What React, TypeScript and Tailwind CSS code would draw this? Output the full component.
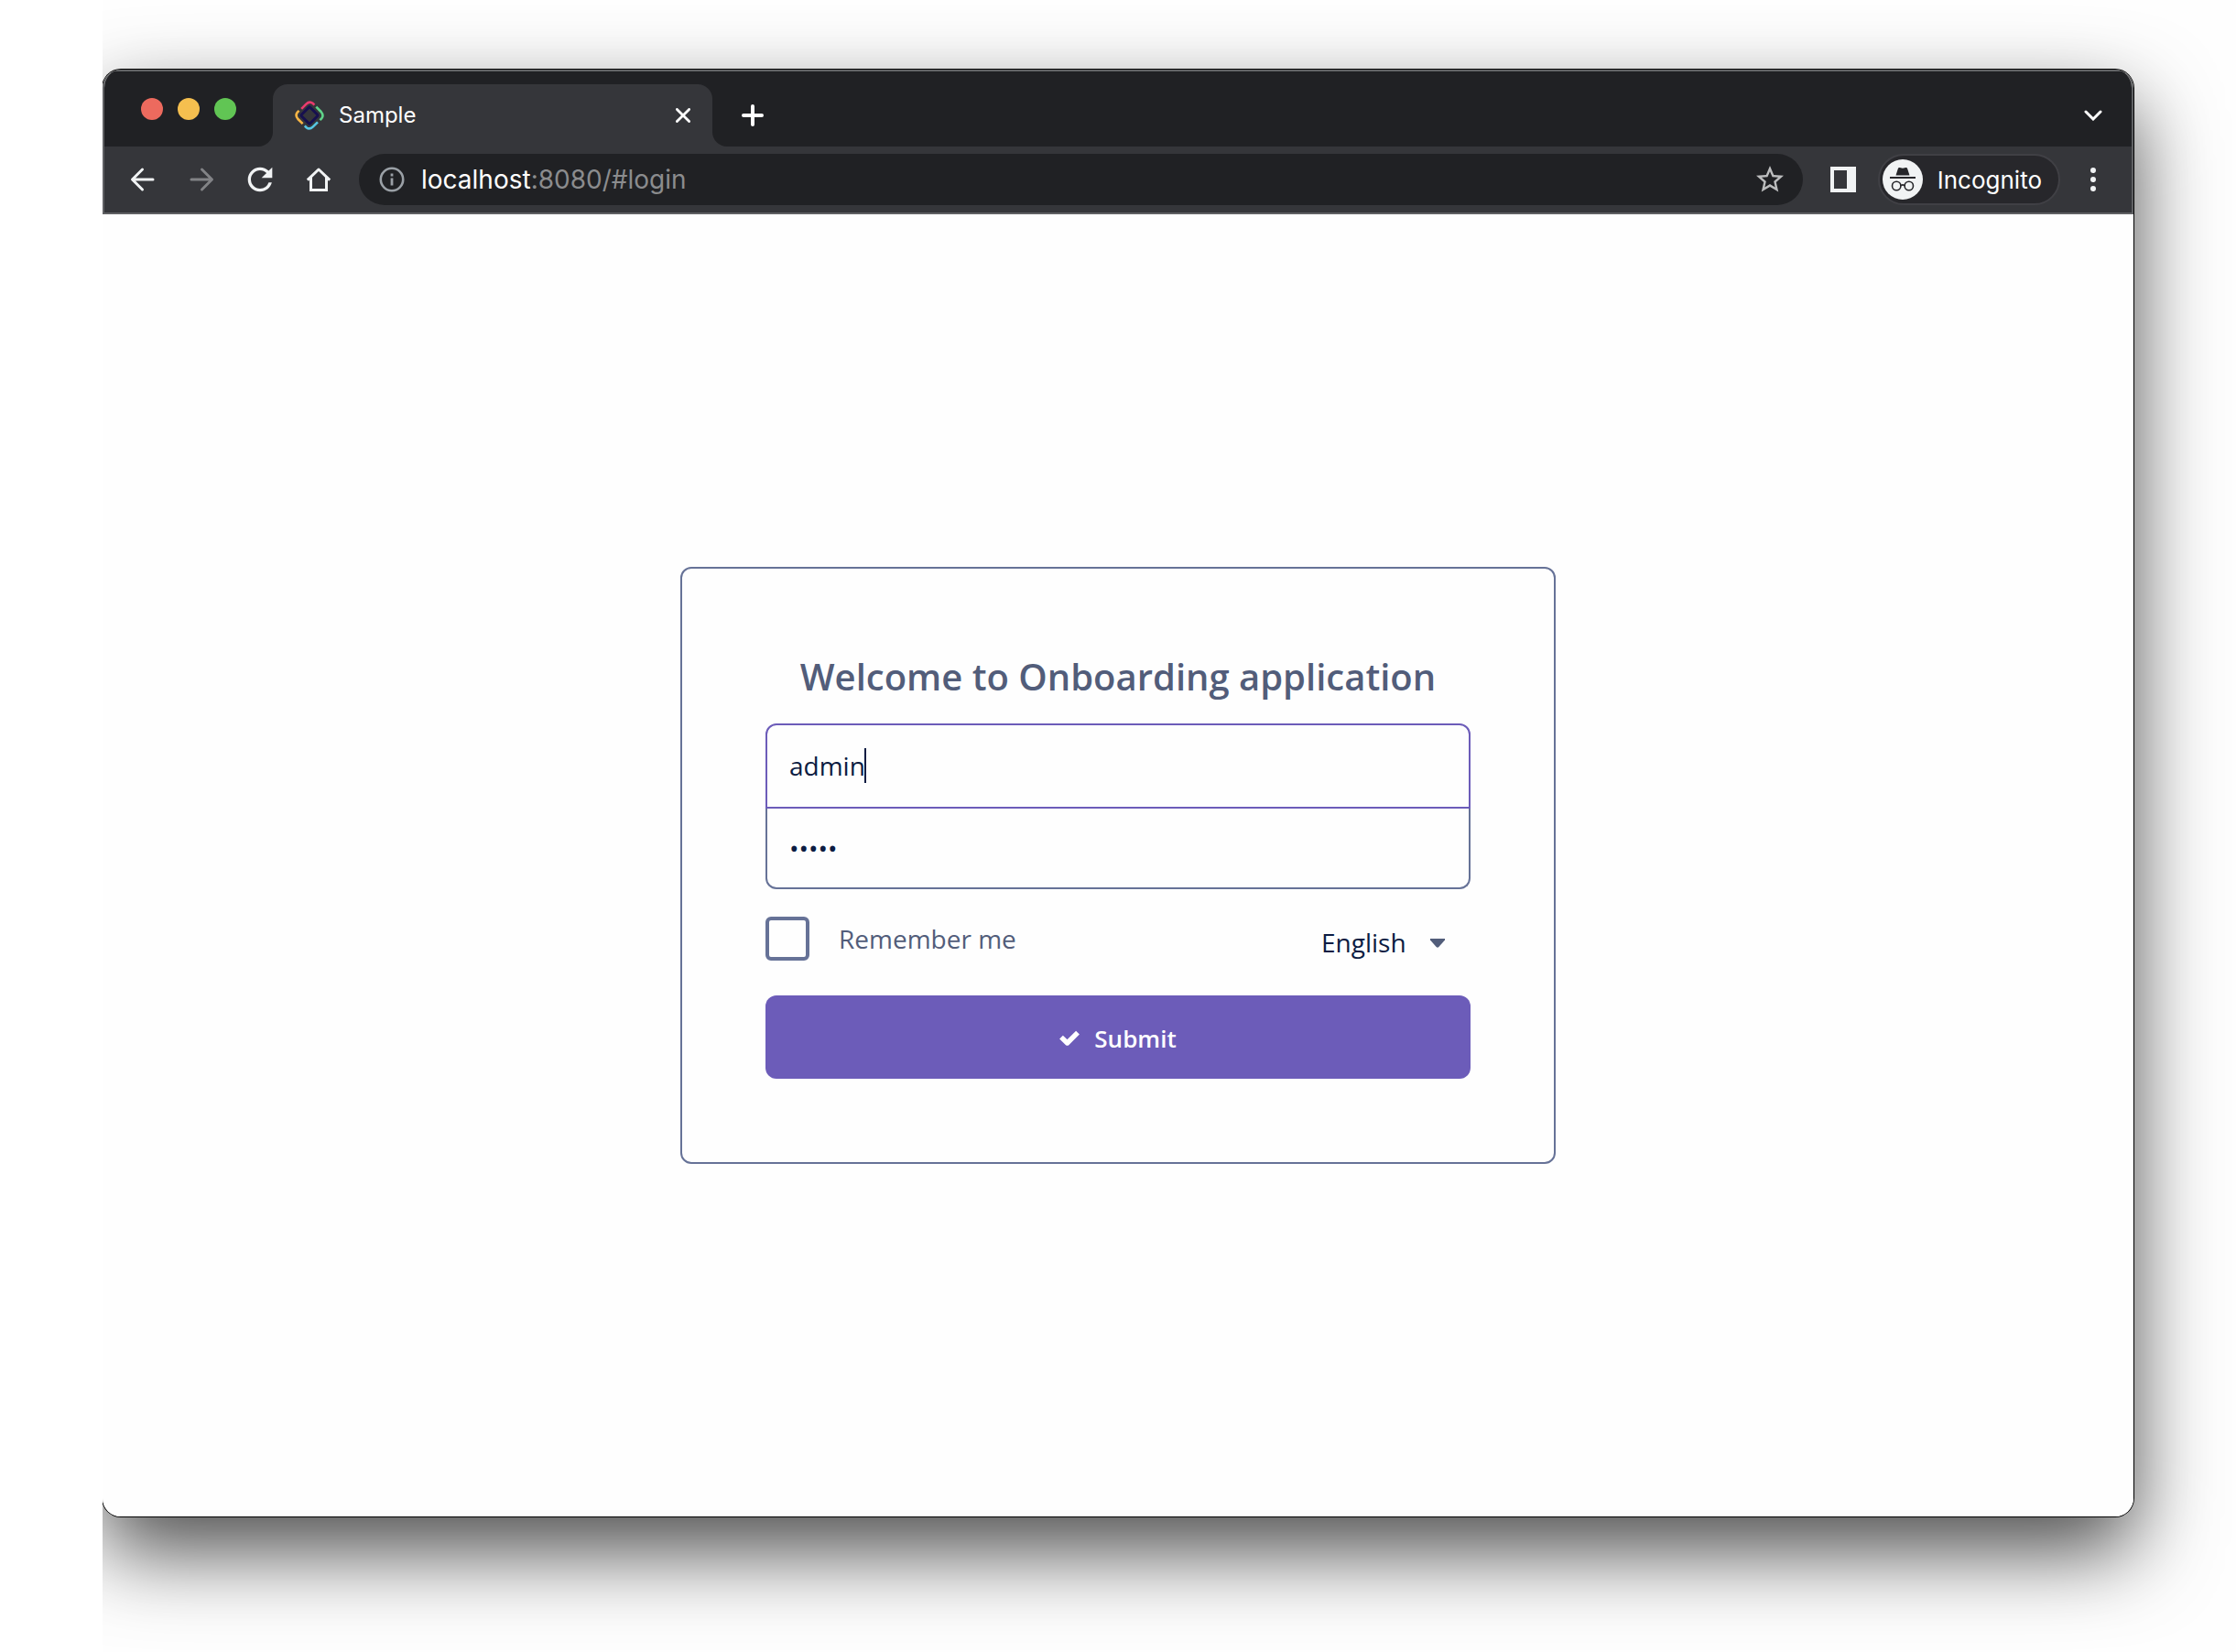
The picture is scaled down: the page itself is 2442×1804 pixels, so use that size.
import { useState } from "react";
import type { ReactNode } from "react";
import { MdRefresh, MdStarBorder } from "react-icons/md";

function Favicon() {
  return (
    <svg viewBox="0 0 32 32" className="size-8 shrink-0" fill="none" strokeWidth="2.6" aria-hidden="true">
      <rect x="9.3" y="9.3" width="13.4" height="13.4" rx="1" transform="rotate(45 16 16)" stroke="#16104f" strokeWidth="3" />
      <path d="M7.2 8.8 L12.4 3.6 Q16 0 19.6 2.8 L21.4 4.6" stroke="#ea3a6e" />
      <path d="M23.3 6.6 L28.6 12 Q32 16 29.2 19.4 L27.4 21.2" stroke="#5fd38a" />
      <path d="M25 23.4 L19.6 28.6 Q16 32 12.6 29.2 L10.8 27.4" stroke="#56c6e4" />
      <path d="M8.6 25.2 L3.4 20 Q0 16 2.8 12.6 L4.6 10.8" stroke="#f6b545" />
    </svg>
  );
}

function ArrowIcon({ back }: { back?: boolean }) {
  return (
    <svg viewBox="0 0 28 28" className="size-7" fill="none" stroke="currentColor" strokeWidth="3" strokeLinecap="round" strokeLinejoin="round" aria-hidden="true">
      {back ? <path d="M25 14H3M13.500 3L2.500 14l11 11" /> : <path d="M3 14h22M14.500 3l11 11-11 11" />}
    </svg>
  );
}

function HomeIcon() {
  return (
    <svg viewBox="0 0 28 28" className="size-7" fill="none" stroke="currentColor" strokeWidth="3" strokeLinejoin="round" aria-hidden="true">
      <path d="M1.800 14.600 L14 3 L26.200 14.600" />
      <path d="M5.500 12v13.500h17V12" strokeLinejoin="miter" />
    </svg>
  );
}

function InfoIcon() {
  return (
    <svg viewBox="0 0 28 28" className="size-7 shrink-0 text-[#9aa0a6]" fill="none" stroke="currentColor" aria-hidden="true">
      <circle cx="14" cy="14" r="12.200" strokeWidth="2.600" />
      <path d="M14 12.500v8M14 7.500v3" strokeWidth="2.800" />
    </svg>
  );
}

function IncognitoIcon() {
  return (
    <svg viewBox="0 0 44 44" className="size-11 shrink-0" aria-hidden="true">
      <circle cx="22" cy="22" r="22" fill="#f1f3f4" />
      <path d="M14.500 17.600 L17 9.800 Q17.500 8.600 18.800 9 L22 9.800 L25.200 9 Q26.500 8.600 27 9.800 L29.500 17.600 Z" fill="#26262a" />
      <path d="M8 20h28" stroke="#26262a" strokeWidth="1.800" />
      <g fill="none" stroke="#26262a" strokeWidth="1.600">
        <circle cx="15.200" cy="29" r="4.700" />
        <circle cx="28.800" cy="29" r="4.700" />
        <path d="M19.800 28.600q2.200-1.400 4.400 0" />
      </g>
    </svg>
  );
}

function ToolButton({ label, children, dim }: { label: string; children: ReactNode; dim?: boolean }) {
  return (
    <button type="button" aria-label={label} className={`flex size-10 items-center justify-center ${dim ? "text-[#828386]" : "text-[#f1f3f4]"}`}>
      {children}
    </button>
  );
}

function TabStrip() {
  return (
    <div className="flex h-[84px] items-end border-t-2 border-[#626466] bg-[#202124] pr-[26px] pl-10">
      <div className="flex h-full items-center gap-4">
        <span className="size-6 rounded-full bg-[#ed6a5e]" />
        <span className="size-6 rounded-full bg-[#f5bf4f]" />
        <span className="size-6 rounded-full bg-[#61c554]" />
      </div>
      <div className="ml-6 size-4 bg-[#35363a]">
        <div className="size-4 rounded-br-2xl bg-[#202124]" />
      </div>
      <div className="flex h-[68px] w-[480px] items-center rounded-t-2xl bg-[#35363a] pr-4 pl-6">
        <Favicon />
        <span className="ml-4 flex-1 text-2xl text-white">Sample</span>
        <button type="button" aria-label="Close tab" className="flex size-8 items-center justify-center text-white">
          <svg viewBox="0 0 16 16" className="size-4" fill="none" stroke="currentColor" strokeWidth="2.800" strokeLinecap="round" aria-hidden="true">
            <path d="M1.400 1.400l13.200 13.200M14.600 1.400L1.400 14.600" />
          </svg>
        </button>
      </div>
      <div className="size-4 bg-[#35363a]">
        <div className="size-4 rounded-bl-2xl bg-[#202124]" />
      </div>
      <button type="button" aria-label="New tab" className="flex h-[68px] w-14 items-center justify-center text-white">
        <svg viewBox="0 0 24 24" className="size-6" fill="none" stroke="currentColor" strokeWidth="4" strokeLinecap="round" aria-hidden="true">
          <path d="M12 2v20M2 12h20" />
        </svg>
      </button>
      <button type="button" aria-label="Search tabs" className="ml-auto flex h-[68px] w-8 items-center justify-center text-white">
        <svg viewBox="0 0 20 12" className="h-3 w-5" fill="none" stroke="currentColor" strokeWidth="3" strokeLinecap="round" aria-hidden="true">
          <path d="M2 2l8 8 8-8" />
        </svg>
      </button>
    </div>
  );
}

function Toolbar() {
  return (
    <div className="flex h-[74px] items-center border-b-2 border-[#5f6063] bg-[#35363a] pr-[26px] pl-[22px]">
      <div className="flex gap-6">
        <ToolButton label="Back"><ArrowIcon back /></ToolButton>
        <ToolButton label="Forward" dim><ArrowIcon /></ToolButton>
        <ToolButton label="Reload"><MdRefresh className="size-10" /></ToolButton>
        <ToolButton label="Home"><HomeIcon /></ToolButton>
      </div>
      <div className="ml-6 flex h-14 flex-1 items-center rounded-full bg-[#202124] pr-[18px] pl-[22px]">
        <InfoIcon />
        <a href="#login" className="ml-[18px] flex-1 text-[28px] text-[#8b8c8e]">
          <span className="text-white">localhost</span>:8080/#login
        </a>
        <button type="button" aria-label="Bookmark this page" className="text-[#bcbdbe]">
          <MdStarBorder className="size-9" />
        </button>
      </div>
      <button type="button" aria-label="Side panel" className="ml-[30px] size-7 border-4 border-r-[10px] border-[#f1f3f4]" />
      <button type="button" className="ml-6 flex h-14 items-center gap-4 rounded-full border-2 border-[#404045] bg-[#27272b] pr-[18px] pl-[3px] text-[26px] text-white">
        <IncognitoIcon />
        Incognito
      </button>
      <button type="button" aria-label="Menu" className="ml-5 flex h-10 w-8 flex-col items-center justify-center gap-1">
        <span className="size-[6px] rounded-full bg-[#f1f3f4]" />
        <span className="size-[6px] rounded-full bg-[#f1f3f4]" />
        <span className="size-[6px] rounded-full bg-[#f1f3f4]" />
      </button>
    </div>
  );
}

function LoginForm() {
  const [user, setUser] = useState("admin");
  const [password, setPassword] = useState("admin");
  return (
    <form
      onSubmit={(e) => e.preventDefault()}
      className="w-full max-w-[956px] rounded-xl border-2 border-[#667297] px-[91px] pt-[86px] pb-[91px] font-['Open_Sans',sans-serif] text-[28px] text-[#0c1c42]"
    >
      <h1 className="text-center text-[40px] leading-[64px] font-semibold text-[#525d7a]">Welcome to Onboarding application</h1>
      <div className="relative mt-[19px]">
        <input
          type="text"
          aria-label="Username"
          value={user}
          onChange={(e) => setUser(e.target.value)}
          className="block h-[93px] w-full rounded-t-xl border-2 border-[#6c5cb9] px-6 pb-[2px] outline-none"
        />
        <span className="absolute top-[27px] left-[108px] h-[38px] w-[2px] bg-[#0c1c42]" />
      </div>
      <input
        type="password"
        aria-label="Password"
        value={password}
        onChange={(e) => setPassword(e.target.value)}
        className="block h-[88px] w-full rounded-b-xl border-2 border-t-0 border-[#667297] px-6 outline-none"
      />
      <div className="mt-[30px] flex h-12 items-center justify-between">
        <label className="flex items-center gap-8 text-[#525d7a]">
          <input type="checkbox" className="size-12 appearance-none rounded-md border-4 border-[#667297]" />
          Remember me
        </label>
        <div className="relative pt-2">
          <select aria-label="Language" className="w-[163px] appearance-none bg-transparent outline-none">
            <option>English</option>
          </select>
          <svg viewBox="0 0 16 10" className="pointer-events-none absolute top-[25px] right-7 h-[10px] w-4 fill-[#525d7a]" aria-hidden="true">
            <path d="M0 0h16v1.500L9.400 9Q8 10.400 6.600 9L0 1.500z" />
          </svg>
        </div>
      </div>
      <button type="submit" className="mt-[38px] flex h-[91px] w-full items-center justify-center gap-4 rounded-xl bg-[#6c5cb9] pt-[3px] text-[26px] font-semibold text-white">
        <svg viewBox="0 0 22 18" className="h-[18px] w-[22px]" fill="none" stroke="currentColor" strokeWidth="5.400" strokeLinejoin="round" aria-hidden="true">
          <path d="M2 7.600l6.600 6.400L20 2.600" />
        </svg>
        Submit
      </button>
    </form>
  );
}

export default function App() {
  return (
    <div className="flex min-h-screen bg-white pl-28">
      <div className="flex flex-1 overflow-hidden bg-[#fefefe] pt-[76px] pr-28 pb-[148px]">
        <div className="flex flex-1 flex-col rounded-[20px] shadow-[0_0_0_1px_#000,0_38px_90px_rgba(0,0,0,0.7)]">
          <header className="overflow-hidden rounded-t-[20px] border-x-2 border-[#5f6063] font-['Inter',sans-serif]">
            <TabStrip />
            <Toolbar />
          </header>
          <main className="flex flex-1 items-center justify-center rounded-b-[20px] bg-[#fefefe]">
            <LoginForm />
          </main>
        </div>
      </div>
    </div>
  );
}
